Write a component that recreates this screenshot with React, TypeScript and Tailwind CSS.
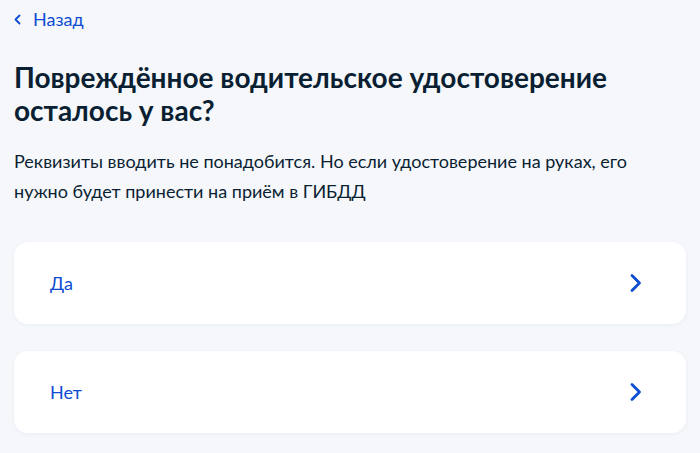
import React from "react";

const Chevron = () => (
  <svg width="16" height="22" viewBox="0 0 16 22" fill="none">
    <path d="M4 3.5l7.5 7.5-7.5 7.5" stroke="#0d4cd3" strokeWidth="2.8" strokeLinecap="round" strokeLinejoin="round" />
  </svg>
);

const Option = ({ label }: { label: string }) => (
  <button className="flex h-[82px] w-full items-center justify-between rounded-[14px] bg-white pl-[36px] pr-[42px] text-left shadow-[0_1px_4px_rgba(30,60,120,0.06)]">
    <span className="text-[18px] text-[#0d4cd3]">{label}</span>
    <Chevron />
  </button>
);

export default function App() {
  return (
    <div className="min-h-[453px] w-[700px] bg-[#f5f7fb] px-[14px] pt-[8px] text-[#0b1f33]" style={{ fontFamily: "Lato, 'Noto Sans', sans-serif" }}>
      <a className="flex h-[22px] items-center gap-[12px] text-[18px] text-[#0d4cd3]">
        <svg width="7" height="11" viewBox="0 0 7 11" fill="none">
          <path d="M5.5 1.5L1.5 5.5l4 4" stroke="#0d4cd3" strokeWidth="1.8" strokeLinecap="round" strokeLinejoin="round" />
        </svg>
        <span>Назад</span>
      </a>
      <h1 className="mt-[31px] text-[28px] font-bold leading-[33px]">
        Повреждённое водительское удостоверение
        <br />
        осталось у вас?
      </h1>
      <p className="mt-[19px] text-[18px] leading-[30px]">
        Реквизиты вводить не понадобится. Но если удостоверение на руках, его
        <br />
        нужно будет принести на приём в ГИБДД
      </p>
      <div className="mt-[36px] flex w-[672px] flex-col gap-[27px]">
        <Option label="Да" />
        <Option label="Нет" />
      </div>
    </div>
  );
}
